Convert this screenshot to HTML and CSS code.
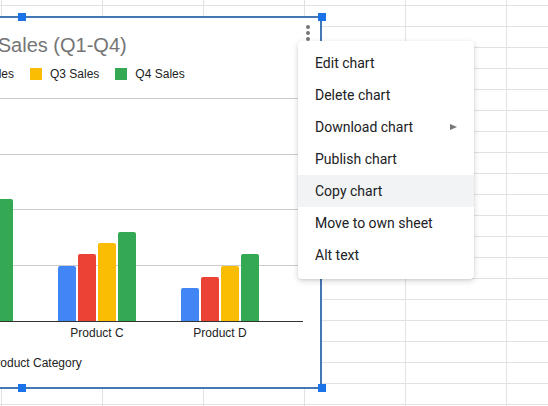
FILE: index.html
```html
<!DOCTYPE html>
<html lang="en">
<head>
  <meta charset="UTF-8">
  <meta name="viewport" content="width=device-width, initial-scale=1.0">
  <title>Chart menu</title>
  <link rel="stylesheet" href="styles.css">
</head>
<body>
  <div class="sheet">
    <div class="chart">
      <span class="handle handle-top"></span>
      <span class="handle handle-top-right"></span>
      <span class="handle handle-bottom"></span>
      <span class="handle handle-bottom-right"></span>

      <button class="kebab" aria-label="Chart options"><i></i><i></i><i></i></button>

      <h1 class="chart-title">Product Sales (Q1-Q4)</h1>

      <ul class="legend">
        <li><span class="swatch q1"></span>Q1 Sales</li>
        <li><span class="swatch q2"></span>Q2 Sales</li>
        <li><span class="swatch q3"></span>Q3 Sales</li>
        <li><span class="swatch q4"></span>Q4 Sales</li>
      </ul>

      <div class="plot">
        <div class="bars">
          <div class="group">
            <div class="bar q1" style="height:78px"></div>
            <div class="bar q2" style="height:89px"></div>
            <div class="bar q3" style="height:100px"></div>
            <div class="bar q4" style="height:111px"></div>
          </div>
          <div class="group">
            <div class="bar q1" style="height:67px"></div>
            <div class="bar q2" style="height:89px"></div>
            <div class="bar q3" style="height:100px"></div>
            <div class="bar q4" style="height:122px"></div>
          </div>
          <div class="group">
            <div class="bar q1" style="height:55px"></div>
            <div class="bar q2" style="height:67px"></div>
            <div class="bar q3" style="height:78px"></div>
            <div class="bar q4" style="height:89px"></div>
          </div>
          <div class="group">
            <div class="bar q1" style="height:33px"></div>
            <div class="bar q2" style="height:44px"></div>
            <div class="bar q3" style="height:55px"></div>
            <div class="bar q4" style="height:67px"></div>
          </div>
        </div>
        <div class="labels">
          <span>Product A</span>
          <span>Product B</span>
          <span>Product C</span>
          <span>Product D</span>
        </div>
        <div class="axis-title">Product Category</div>
      </div>
    </div>

    <ul class="menu">
      <li>Edit chart</li>
      <li>Delete chart</li>
      <li class="has-sub">Download chart <span class="arrow"></span></li>
      <li>Publish chart</li>
      <li class="active">Copy chart</li>
      <li>Move to own sheet</li>
      <li>Alt text</li>
    </ul>
  </div>
</body>
</html>
```

FILE: styles.css
```css
/* base */
* {
  margin: 0;
  padding: 0;
  box-sizing: border-box;
}

body {
  width: 548px;
  height: 406px;
  overflow: hidden;
  background: #fff;
  font-family: 'Liberation Sans', Arial, sans-serif;
}

/* spreadsheet cells */
.sheet {
  position: relative;
  width: 548px;
  height: 406px;
  background-color: #fff;
  background-image:
    linear-gradient(to right, #e2e2e2 1px, transparent 1px),
    linear-gradient(to bottom, #e2e2e2 1px, transparent 1px);
  background-size: 101px 100%, 100% 21px;
  background-position: 1px 0, 0 5px;
}

/* chart object */
.chart {
  position: absolute;
  left: -278px;
  top: 16px;
  width: 600px;
  height: 373px;
  background: #fff;
  border: 2px solid #4577b4;
  color: #222;
}

.handle {
  position: absolute;
  width: 8px;
  height: 8px;
  background: #1a73e8;
}

.handle-top { top: -5px; left: calc(50% - 4px); }
.handle-top-right { top: -5px; right: -6px; }
.handle-bottom { bottom: -5px; left: calc(50% - 4px); }
.handle-bottom-right { bottom: -5px; right: -6px; }

.kebab {
  position: absolute;
  top: 7px;
  right: 10px;
  display: flex;
  flex-direction: column;
  gap: 2px;
  border: none;
  background: none;
}

.kebab i {
  width: 4px;
  height: 4px;
  border-radius: 50%;
  background: #777;
}

.chart-title {
  margin-top: 16px;
  padding-left: 6px;
  text-align: center;
  font-size: 20px;
  line-height: 23px;
  font-weight: normal;
  color: #757575;
  white-space: nowrap;
}

.legend {
  list-style: none;
  margin-top: 10px;
  display: flex;
  justify-content: center;
  gap: 16px;
  font-size: 12px;
  line-height: 14px;
  white-space: nowrap;
}

.legend li {
  display: flex;
  align-items: center;
  gap: 8px;
}

.swatch {
  width: 12px;
  height: 12px;
}

.q1 { background: #4285f4; }
.q2 { background: #ea4335; }
.q3 { background: #fbbc04; }
.q4 { background: #34a853; }

/* plot */
.plot {
  margin: 17px 17px 0 35px;
  font-size: 12px;
  line-height: 14px;
}

.bars {
  height: 224px;
  display: flex;
  justify-content: flex-end;
  padding-right: 21.5px;
  border-bottom: 1px solid #333;
  background:
    linear-gradient(#ccc, #ccc) 0 0 / 100% 1px no-repeat,
    linear-gradient(#ccc, #ccc) 0 56px / 100% 1px no-repeat,
    linear-gradient(#ccc, #ccc) 0 111px / 100% 1px no-repeat,
    linear-gradient(#ccc, #ccc) 0 167px / 100% 1px no-repeat;
}

.group {
  width: 123px;
  display: flex;
  justify-content: center;
  align-items: flex-end;
  gap: 2px;
}

.bar {
  width: 18px;
  border-radius: 2px 2px 0 0;
}

.labels {
  display: flex;
  justify-content: flex-end;
  padding-right: 21.5px;
  margin-top: 4px;
}

.labels span {
  width: 123px;
  text-align: center;
}

.axis-title {
  margin-top: 16px;
  padding-left: 8px;
  text-align: center;
}

/* context menu */
.menu {
  position: absolute;
  left: 298px;
  top: 41px;
  width: 176px;
  padding: 6px 0 8px;
  list-style: none;
  background: #fff;
  border-radius: 4px;
  box-shadow: 0 2px 6px rgba(0, 0, 0, 0.16), 0 1px 2px rgba(0, 0, 0, 0.08);
  font-family: Roboto, 'Liberation Sans', sans-serif;
  font-size: 14px;
  color: #202124;
}

.menu li {
  height: 32px;
  line-height: 32px;
  padding: 0 17px;
  display: flex;
  justify-content: space-between;
  align-items: center;
}

.menu li.active {
  background: #f1f3f4;
}

.arrow {
  width: 0;
  height: 0;
  border-left: 7px solid #777;
  border-top: 3.5px solid transparent;
  border-bottom: 3.5px solid transparent;
}
```
